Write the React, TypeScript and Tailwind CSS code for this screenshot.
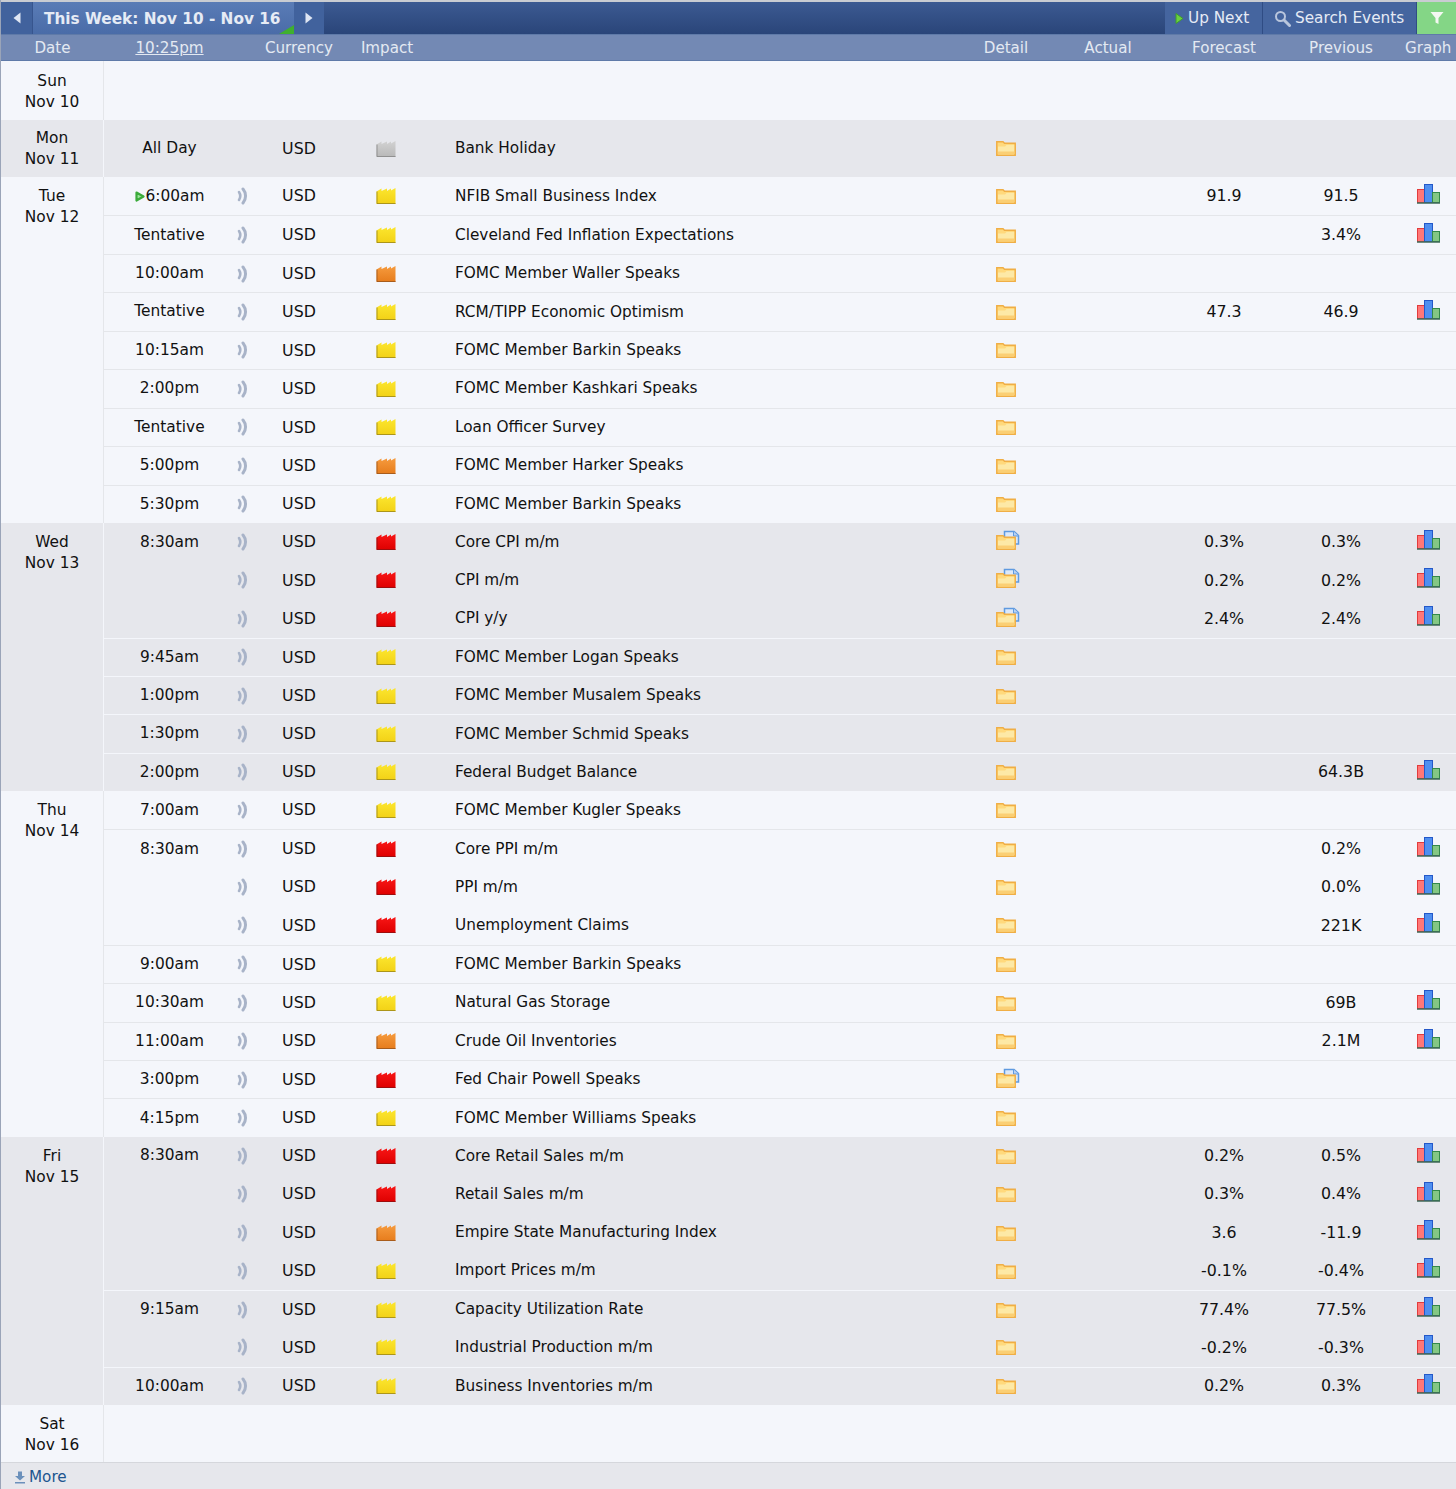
const COLS = 'grid grid-cols-[131px_30px_68px_106px_523px_88px_116px_116px_118px_56px]';

type Impact = 'grey' | 'yellow' | 'orange' | 'red';

interface Row {
  time?: string;
  impact: Impact;
  title: string;
  doc?: boolean;
  forecast?: string;
  previous?: string;
  graph?: boolean;
  next?: boolean;
  sound?: boolean;
  tall?: boolean;
  group?: boolean; // continues the time above, no line between
}

interface Day {
  name: string;
  date: string;
  grey: boolean;
  rows: Row[];
}

const DAYS: Day[] = [
  { name: 'Sun', date: 'Nov 10', grey: false, rows: [] },
  {
    name: 'Mon',
    date: 'Nov 11',
    grey: true,
    rows: [{ time: 'All Day', impact: 'grey', title: 'Bank Holiday', sound: false, tall: true }],
  },
  {
    name: 'Tue',
    date: 'Nov 12',
    grey: false,
    rows: [
      { time: '6:00am', impact: 'yellow', title: 'NFIB Small Business Index', forecast: '91.9', previous: '91.5', graph: true, next: true },
      { time: 'Tentative', impact: 'yellow', title: 'Cleveland Fed Inflation Expectations', previous: '3.4%', graph: true },
      { time: '10:00am', impact: 'orange', title: 'FOMC Member Waller Speaks' },
      { time: 'Tentative', impact: 'yellow', title: 'RCM/TIPP Economic Optimism', forecast: '47.3', previous: '46.9', graph: true },
      { time: '10:15am', impact: 'yellow', title: 'FOMC Member Barkin Speaks' },
      { time: '2:00pm', impact: 'yellow', title: 'FOMC Member Kashkari Speaks' },
      { time: 'Tentative', impact: 'yellow', title: 'Loan Officer Survey' },
      { time: '5:00pm', impact: 'orange', title: 'FOMC Member Harker Speaks' },
      { time: '5:30pm', impact: 'yellow', title: 'FOMC Member Barkin Speaks' },
    ],
  },
  {
    name: 'Wed',
    date: 'Nov 13',
    grey: true,
    rows: [
      { time: '8:30am', impact: 'red', title: 'Core CPI m/m', doc: true, forecast: '0.3%', previous: '0.3%', graph: true },
      { group: true, impact: 'red', title: 'CPI m/m', doc: true, forecast: '0.2%', previous: '0.2%', graph: true },
      { group: true, impact: 'red', title: 'CPI y/y', doc: true, forecast: '2.4%', previous: '2.4%', graph: true },
      { time: '9:45am', impact: 'yellow', title: 'FOMC Member Logan Speaks' },
      { time: '1:00pm', impact: 'yellow', title: 'FOMC Member Musalem Speaks' },
      { time: '1:30pm', impact: 'yellow', title: 'FOMC Member Schmid Speaks' },
      { time: '2:00pm', impact: 'yellow', title: 'Federal Budget Balance', previous: '64.3B', graph: true },
    ],
  },
  {
    name: 'Thu',
    date: 'Nov 14',
    grey: false,
    rows: [
      { time: '7:00am', impact: 'yellow', title: 'FOMC Member Kugler Speaks' },
      { time: '8:30am', impact: 'red', title: 'Core PPI m/m', previous: '0.2%', graph: true },
      { group: true, impact: 'red', title: 'PPI m/m', previous: '0.0%', graph: true },
      { group: true, impact: 'red', title: 'Unemployment Claims', previous: '221K', graph: true },
      { time: '9:00am', impact: 'yellow', title: 'FOMC Member Barkin Speaks' },
      { time: '10:30am', impact: 'yellow', title: 'Natural Gas Storage', previous: '69B', graph: true },
      { time: '11:00am', impact: 'orange', title: 'Crude Oil Inventories', previous: '2.1M', graph: true },
      { time: '3:00pm', impact: 'red', title: 'Fed Chair Powell Speaks', doc: true },
      { time: '4:15pm', impact: 'yellow', title: 'FOMC Member Williams Speaks' },
    ],
  },
  {
    name: 'Fri',
    date: 'Nov 15',
    grey: true,
    rows: [
      { time: '8:30am', impact: 'red', title: 'Core Retail Sales m/m', forecast: '0.2%', previous: '0.5%', graph: true },
      { group: true, impact: 'red', title: 'Retail Sales m/m', forecast: '0.3%', previous: '0.4%', graph: true },
      { group: true, impact: 'orange', title: 'Empire State Manufacturing Index', forecast: '3.6', previous: '-11.9', graph: true },
      { group: true, impact: 'yellow', title: 'Import Prices m/m', forecast: '-0.1%', previous: '-0.4%', graph: true },
      { time: '9:15am', impact: 'yellow', title: 'Capacity Utilization Rate', forecast: '77.4%', previous: '77.5%', graph: true },
      { group: true, impact: 'yellow', title: 'Industrial Production m/m', forecast: '-0.2%', previous: '-0.3%', graph: true },
      { time: '10:00am', impact: 'yellow', title: 'Business Inventories m/m', forecast: '0.2%', previous: '0.3%', graph: true },
    ],
  },
  { name: 'Sat', date: 'Nov 16', grey: false, rows: [] },
];

const IMPACT_FILL: Record<Impact, [string, string, string]> = {
  grey: ['#d2d2d2', '#b8b8b8', '#868686'],
  yellow: ['#fce62e', '#f2d116', '#9a861a'],
  orange: ['#f69b3e', '#e67c1c', '#98541c'],
  red: ['#f81616', '#de0000', '#8c1010'],
};

function ImpactIcon({ level }: { level: Impact }) {
  const [top, bottom, edge] = IMPACT_FILL[level];
  return (
    <svg width="20" height="18" viewBox="0 0 20 18" aria-hidden="true">
      <defs>
        <linearGradient id={`impact-${level}`} x1="0" y1="0" x2="0" y2="1">
          <stop offset="0" stopColor={top} />
          <stop offset="1" stopColor={bottom} />
        </linearGradient>
      </defs>
      <path d="M0.5 17V4.5L5.5 1.5V4L11 1.5V4L15 1.5V3.5L19.5 1V17Z" fill={`url(#impact-${level})`} />
      <path d="M1 4.5V16.5H19.5" fill="none" stroke={edge} strokeWidth="1" opacity="0.8" />
    </svg>
  );
}

function SoundIcon() {
  return (
    <svg width="13" height="18" viewBox="0 0 13 18" fill="none" stroke="#a8b3c8" strokeLinecap="round" aria-hidden="true">
      <path d="M3 5C4.6 7.5 4.6 10.5 3 13" strokeWidth="2.6" />
      <path d="M7 2C10.4 6 10.4 12 7 16" strokeWidth="3" />
    </svg>
  );
}

function FolderIcon({ doc }: { doc?: boolean }) {
  return (
    <svg width="24" height="22" viewBox="0 0 24 22" aria-hidden="true">
      {doc && (
        <g>
          <path d="M8.5 1.5H18L22.5 5.5V14H8.5Z" fill="#dbe8fa" stroke="#5f9ae0" strokeWidth="1.5" />
          <path d="M17.5 1.5V6H22.5" fill="#b9d2f2" stroke="#5f9ae0" strokeWidth="1" />
        </g>
      )}
      <path d="M0.8 5.8H7L8.5 7.3H19.2V19.2H0.8Z" fill="#ffd97c" stroke="#f0ae45" strokeWidth="1.5" />
      <path d="M2 10.5H9L10.5 9H18.2V18.2H2Z" fill="#fde9a6" />
      <path d="M2 15.5H18.2V18.2H2Z" fill="#fbcf74" />
    </svg>
  );
}

function GraphIcon() {
  return (
    <svg width="23" height="20" viewBox="0 0 23 20" aria-hidden="true">
      <rect x="0.5" y="5.5" width="7" height="13" fill="#f77" stroke="#e23c3c" />
      <rect x="7.5" y="0.5" width="8" height="18" fill="#4f8ff0" stroke="#2458c8" />
      <rect x="15.5" y="8.5" width="7" height="10" fill="#84c784" stroke="#33894a" />
      <path d="M0 19H23" stroke="#3f6a58" strokeWidth="1.5" />
    </svg>
  );
}

function PlayArrow() {
  return (
    <svg width="11" height="11" viewBox="0 0 11 11" aria-hidden="true">
      <path d="M1.5 1.5L8.5 5.5L1.5 9.5Z" fill="#9be29b" stroke="#3bab3b" strokeWidth="2.2" strokeLinejoin="round" />
    </svg>
  );
}

function EventRow({ row, isFirst, grey }: { row: Row; isFirst: boolean; grey: boolean }) {
  return (
    <div
      className={`${COLS} ${row.tall ? 'h-[57px]' : grey ? 'h-[38.29px]' : 'h-[38.44px]'} items-center ${
        isFirst || row.group ? '' : grey ? 'border-t border-[#f4f6fb]' : 'border-t border-[#e4e6ea]'
      }`}
    >
      <div className="flex items-center justify-center text-[15.4px]">
        {row.next && <PlayArrow />}
        {row.time}
      </div>
      <div className="flex justify-start pl-[1px]">{row.sound !== false && <SoundIcon />}</div>
      <div className="text-center text-[15.8px]">USD</div>
      <div className="flex justify-center">
        <ImpactIcon level={row.impact} />
      </div>
      <div className="pl-4 text-[15.3px] whitespace-nowrap">{row.title}</div>
      <div className={`flex justify-center pl-[4px] ${row.tall ? 'mb-[3px]' : 'mb-[2px]'}`}>
        <FolderIcon doc={row.doc} />
      </div>
      <div />
      <div className="text-center text-[15.8px]">{row.forecast}</div>
      <div className="text-center text-[15.8px]">{row.previous}</div>
      <div className="mb-[5px] flex justify-start pl-[17px]">{row.graph && <GraphIcon />}</div>
    </div>
  );
}

function DayBlock({ day }: { day: Day }) {
  const padTop = day.name === 'Sun' ? 'pt-[10px]' : day.name === 'Mon' ? 'pt-[8px]' : 'pt-[9px]';
  const emptyHeight = day.name === 'Sun' ? 'h-[59px]' : day.name === 'Sat' ? 'h-[57px]' : '';
  return (
    <div className={`flex ${day.grey ? 'bg-[#e6e7ec]' : 'bg-[#f4f6fb]'}`}>
      <div
        className={`w-[103px] shrink-0 border-r ${day.grey ? 'border-[#f4f6fb]' : 'border-[#e4e6ea]'} ${padTop} text-center text-[15.4px] leading-[21px]`}
      >
        <div>{day.name}</div>
        <div>{day.date}</div>
      </div>
      <div className={`flex-1 ${emptyHeight}`}>
        {day.rows.map((row, i) => (
          <EventRow key={i} row={row} isFirst={i === 0} grey={day.grey} />
        ))}
      </div>
    </div>
  );
}

export default function App() {
  return (
    <div className="h-[1489px] w-[1456px] overflow-hidden border-l border-[#9aa4b8] bg-[#f4f6fb] font-['DejaVu_Sans',Verdana,sans-serif] text-[16px] text-[#111]">
      {/* top bar */}
      <div className="h-[2px] bg-[#c9ccd2]" />
      <div className="flex h-[32px] bg-gradient-to-b from-[#3c5a92] to-[#2a4579] text-white">
        <button type="button" className="flex w-[31px] items-center justify-center bg-[#41629d]">
          <svg width="8" height="12" viewBox="0 0 8 12" aria-hidden="true">
            <path d="M7.5 0.5V11.5L0.5 6Z" fill="#dfe6f3" />
          </svg>
        </button>
        <div className="relative flex w-[262px] items-center border-l border-[#37558e] bg-gradient-to-b from-[#5a7cb6] to-[#4a6ca8] pt-[2px] pl-[11px] text-[15.3px] font-bold text-[#e6ebf5]">
          This Week: Nov 10 - Nov 16
          <span className="absolute bottom-0 right-0 h-0 w-0 border-b-[9px] border-l-[15px] border-b-[#3fb02e] border-l-transparent" />
        </div>
        <button type="button" className="flex w-[30px] items-center justify-center bg-[#41629d]">
          <svg width="8" height="12" viewBox="0 0 8 12" aria-hidden="true">
            <path d="M0.5 0.5V11.5L7.5 6Z" fill="#dfe6f3" />
          </svg>
        </button>
        <div className="flex-1" />
        <div className="flex w-[98px] items-center gap-[4px] border-r border-[#2f4c84] bg-[#45659f] pl-[10px] text-[15.25px] text-[#e6ebf5]">
          <svg width="9" height="13" viewBox="0 0 9 13" aria-hidden="true">
            <path d="M1 1.5L8 6.5L1 11.5Z" fill="#6ad13f" stroke="#3f9c2e" />
          </svg>
          Up Next
        </div>
        <div className="flex w-[154px] items-center gap-[4px] border-r border-[#2f4c84] bg-[#45659f] pl-[11px] text-[15.3px] text-[#e6ebf5]">
          <svg width="17" height="17" viewBox="0 0 17 17" fill="none" stroke="#b9c6dd" aria-hidden="true">
            <circle cx="6.5" cy="6.5" r="4.5" strokeWidth="2" />
            <path d="M10 10L15.5 15.5" strokeWidth="3" strokeLinecap="round" />
          </svg>
          Search Events
        </div>
        <div className="flex w-[39px] items-center justify-center bg-[#84d686]">
          <svg width="14" height="14" viewBox="0 0 14 14" aria-hidden="true">
            <path d="M0.5 1H13.5L8.5 7V13L5.5 11.5V7Z" fill="#f4f8f2" />
          </svg>
        </div>
      </div>

      {/* column heads */}
      <div className="flex h-[27px] items-center border-y border-[#5f7aa8] bg-[#7389b4] pt-[2px] text-[15.1px] text-[#e4e9f2]">
        <div className="w-[103px] text-center">Date</div>
        <div className={`${COLS} flex-1`}>
          <div className="text-center text-[15.2px] underline">10:25pm</div>
          <div />
          <div className="text-center">Currency</div>
          <div className="pl-[2px] text-center">Impact</div>
          <div />
          <div className="text-center">Detail</div>
          <div className="text-center">Actual</div>
          <div className="text-center">Forecast</div>
          <div className="text-center">Previous</div>
          <div className="whitespace-nowrap pl-[5px]">Graph</div>
        </div>
      </div>

      {DAYS.map((day) => (
        <DayBlock key={day.name} day={day} />
      ))}

      {/* more */}
      <div className="flex h-[27px] items-center gap-[3px] border-t border-[#d5d7dc] bg-[#e6e7ec] pt-[3px] pl-[13px] text-[15.2px] text-[#20558f]">
        <svg width="12" height="13" viewBox="0 0 12 13" aria-hidden="true">
          <path d="M4 0.5H8V5H11L6 9.5L1 5H4ZM1 11H11V12.5H1Z" fill="#6b90bb" />
        </svg>
        More
      </div>
    </div>
  );
}
